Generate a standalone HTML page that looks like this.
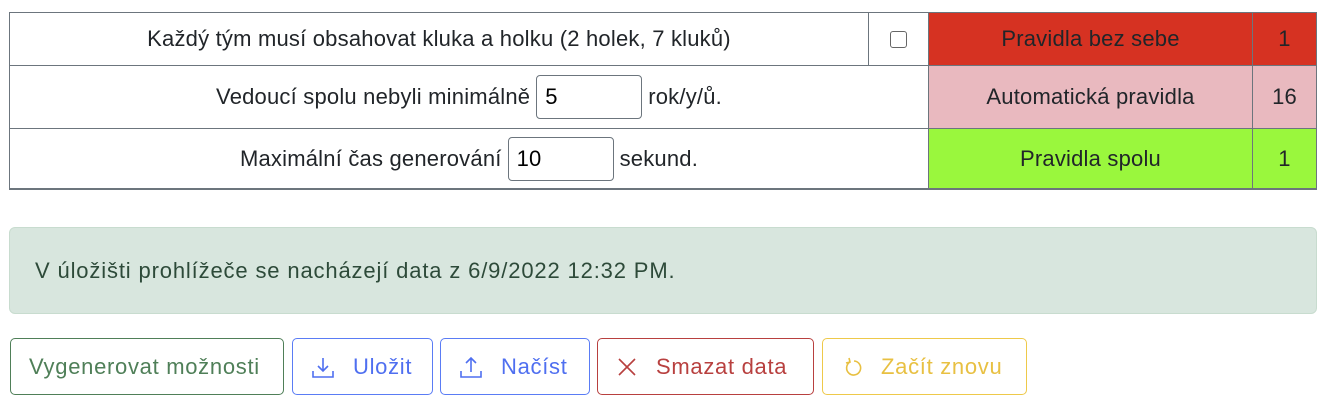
<!DOCTYPE html>
<html><head><meta charset="utf-8"><style>
body{margin:0;width:1332px;height:415px;background:#fff;font-family:"Liberation Sans",sans-serif;font-size:22px;color:#212529;position:relative;overflow:hidden}
.c{position:absolute;box-sizing:border-box;display:flex;align-items:center;justify-content:center;border:1px solid #6c757d;letter-spacing:0.2px;white-space:nowrap}
.inp{display:inline-block;box-sizing:border-box;border:1px solid #6c757d;border-radius:4px;height:44px;width:106px;margin:0 6px;padding:0 8px;line-height:42px;text-align:left;color:#000}
.b{position:absolute;top:338px;height:57px;box-sizing:border-box;border:1px solid;border-radius:5px;display:flex;align-items:center;padding-left:18px;font-size:22px;letter-spacing:0.7px;background:#fff;white-space:nowrap}
.b svg{margin-right:18px;flex-shrink:0}
</style></head><body>
<div class="c" style="left:9px;top:12px;width:860px;height:54px">Každý tým musí obsahovat kluka a holku (2 holek, 7 kluků)</div>
<div class="c" style="left:868px;top:12px;width:61px;height:54px"><span style="width:15px;height:15px;border:1px solid #666;border-radius:3px;display:block"></span></div>
<div class="c" style="left:9px;top:65px;width:920px;height:64px">Vedoucí spolu nebyli minimálně<span class="inp">5</span>rok/y/ů.</div>
<div class="c" style="left:9px;top:128px;width:920px;height:62px;border-bottom-width:2px">Maximální čas generování<span class="inp">10</span>sekund.</div>
<div class="c" style="left:928px;top:12px;width:325px;height:54px;background:#d63222">Pravidla bez sebe</div>
<div class="c" style="left:1252px;top:12px;width:65px;height:54px;background:#d63222">1</div>
<div class="c" style="left:928px;top:65px;width:325px;height:64px;background:#e9b9bf">Automatická pravidla</div>
<div class="c" style="left:1252px;top:65px;width:65px;height:64px;background:#e9b9bf">16</div>
<div class="c" style="left:928px;top:128px;width:325px;height:62px;background:#9af73d;border-bottom-width:2px">Pravidla spolu</div>
<div class="c" style="left:1252px;top:128px;width:65px;height:62px;background:#9af73d;border-bottom-width:2px">1</div>
<div style="position:absolute;left:9px;top:227px;width:1308px;height:87px;box-sizing:border-box;background:#d8e6de;border:1px solid #c8dccf;border-radius:6px;color:#2d4a39;padding-left:25px;line-height:85px;letter-spacing:0.85px;white-space:nowrap">V úložišti prohlížeče se nacházejí data z 6/9/2022 12:32 PM.</div>
<div class="b" style="left:10px;width:274px;border-color:#4f7f58;color:#4f7f58">Vygenerovat možnosti</div>
<div class="b" style="left:292px;width:141px;border-color:#5a7cf5;color:#4f6ff0"><svg width="24" height="24" viewBox="0 0 24 24" fill="none" stroke="#4f6ff0" stroke-width="1.6"><path d="M12 3v13M7 11l5 5 5-5M2 16v6h20v-6"/></svg>Uložit</div>
<div class="b" style="left:440px;width:150px;border-color:#5a7cf5;color:#4f6ff0"><svg width="24" height="24" viewBox="0 0 24 24" fill="none" stroke="#4f6ff0" stroke-width="1.6"><path d="M12 17V3M7 8l5-5 5 5M2 16v6h20v-6"/></svg>Načíst</div>
<div class="b" style="left:597px;width:217px;border-color:#b8403f;color:#b8403f"><svg width="22" height="22" viewBox="0 0 22 22" fill="none" stroke="#b8403f" stroke-width="1.6"><path d="M3 3l16 16M19 3L3 19"/></svg>Smazat data</div>
<div class="b" style="left:822px;width:205px;border-color:#eec94a;color:#e8c042;padding-left:20px"><svg width="20" height="24" viewBox="0 0 20 24" fill="none" stroke="#e8c042" stroke-width="1.6"><path d="M7 7a7 7 0 1 0 4-1M6 3l1 4-4 1"/></svg>Začít znovu</div>
</body></html>
